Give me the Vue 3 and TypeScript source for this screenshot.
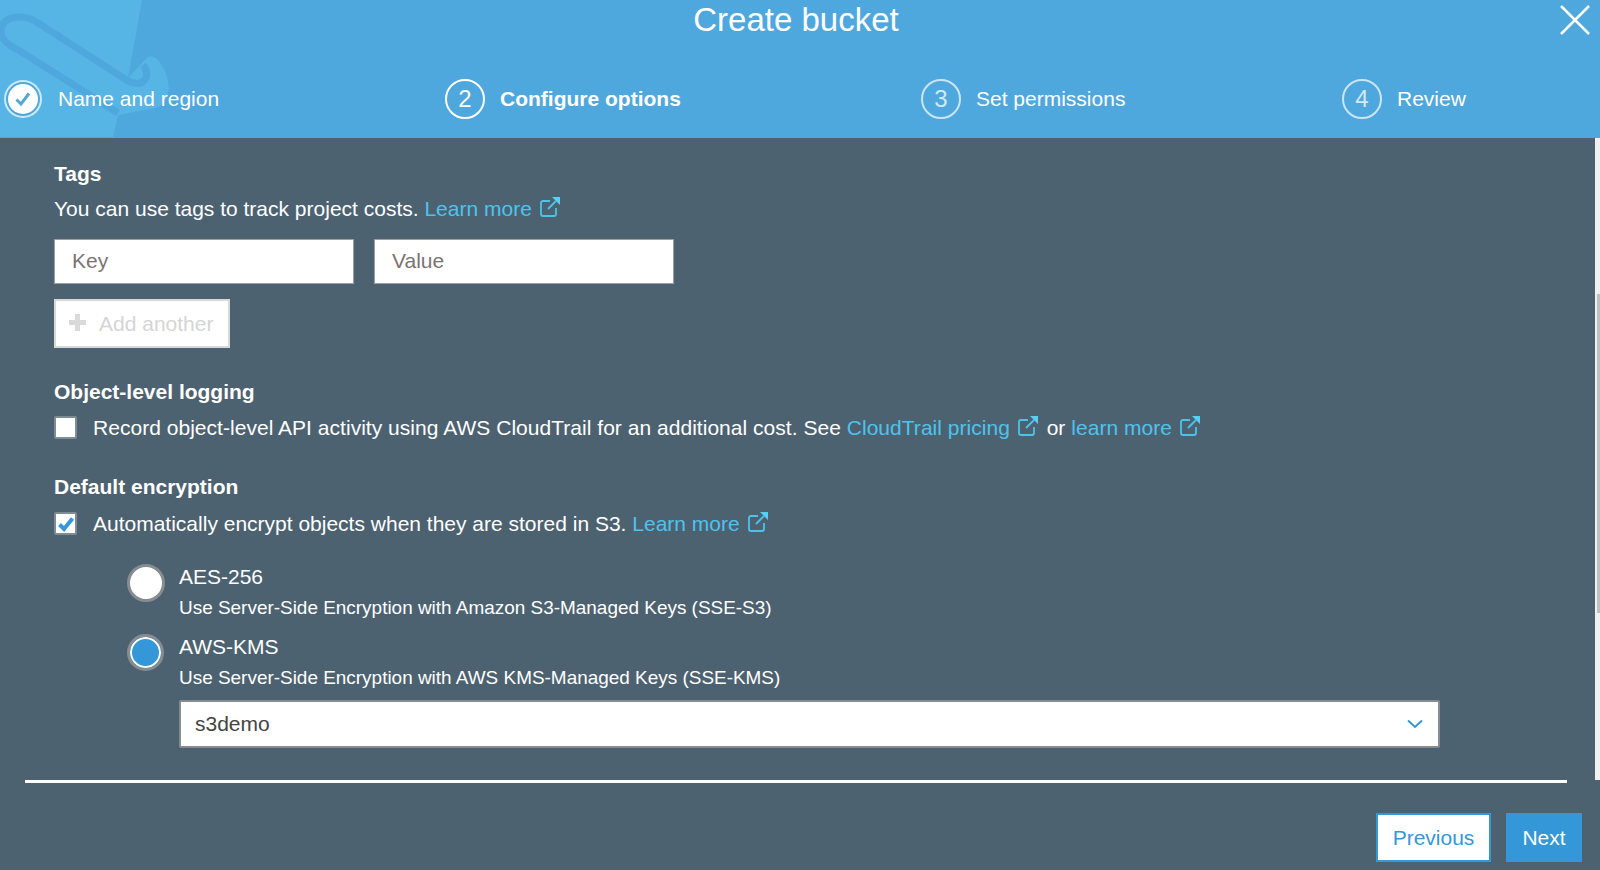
<script setup lang="ts">
const steps = [
  { n: "✓", label: "Name and region", state: "done" },
  { n: "2", label: "Configure options", state: "active" },
  { n: "3", label: "Set permissions", state: "" },
  { n: "4", label: "Review", state: "" },
];
</script>

<template>
  <div class="page">
    <header class="head">
      <svg class="logo" width="175" height="138" viewBox="0 0 175 138">
        <path d="M0 0H142L128 78L143 62Q152 50 161 64Q172 82 167 98Q161 108 150 109L118 115L113 137H0Z" fill="#57b5e5" />
        <path d="M118 113L20 51Q1 42 1 32Q1 17 20 17Q30 17 38 23L128 81Q138 86 144 81Q150 74 143 65" fill="none" stroke="#4fa8dd" stroke-width="7" />
      </svg>
      <h1 class="title">Create bucket</h1>
      <svg class="close" width="32" height="32" viewBox="0 0 32 32">
        <path d="M2 2L30 30M30 2L2 30" stroke="#fff" stroke-width="2.500" fill="none" />
      </svg>
      <ol class="steps">
        <li v-for="s in steps" :key="s.label" :class="['step', s.state]">
          <span class="num">
            <svg v-if="s.state === 'done'" width="20" height="18" viewBox="0 0 20 18">
              <path d="M3.500 9.500L8 14L16 3.500" stroke="#4fa8dd" stroke-width="3" fill="none" />
            </svg>
            <template v-else>{{ s.n }}</template>
          </span>
          <span>{{ s.label }}</span>
        </li>
      </ol>
    </header>

    <main class="body">
      <div class="content">
        <h2 class="heading">Tags</h2>
        <p class="line">
          You can use tags to track project costs.
          <a class="link">Learn more <svg class="ext" viewBox="0 0 22 22"><path d="M17 12V18Q17 20 15 20H4Q2 20 2 18V7Q2 5 4 5H11M9 13L17 5" /><path class="head-fill" d="M13 1H21V9Z" /></svg></a>
        </p>
        <div class="tag-row">
          <div class="field">Key</div>
          <div class="field">Value</div>
        </div>
        <button class="add"><span class="plus"></span>Add another</button>

        <h2 class="heading logging">Object-level logging</h2>
        <div class="check-row">
          <span class="box"></span>
          <p class="line wide">
            Record object-level API activity using AWS CloudTrail for an additional cost. See
            <a class="link">CloudTrail pricing <svg class="ext" viewBox="0 0 22 22"><path d="M17 12V18Q17 20 15 20H4Q2 20 2 18V7Q2 5 4 5H11M9 13L17 5" /><path class="head-fill" d="M13 1H21V9Z" /></svg></a>
            or
            <a class="link">learn more <svg class="ext" viewBox="0 0 22 22"><path d="M17 12V18Q17 20 15 20H4Q2 20 2 18V7Q2 5 4 5H11M9 13L17 5" /><path class="head-fill" d="M13 1H21V9Z" /></svg></a>
          </p>
        </div>

        <h2 class="heading encryption">Default encryption</h2>
        <div class="check-row">
          <span class="box">
            <svg width="18" height="16" viewBox="0 0 18 16"><path d="M2.500 8.500L7 13L15.500 2.500" stroke="#3498d8" stroke-width="4" fill="none" /></svg>
          </span>
          <p class="line">
            Automatically encrypt objects when they are stored in S3.
            <a class="link">Learn more <svg class="ext" viewBox="0 0 22 22"><path d="M17 12V18Q17 20 15 20H4Q2 20 2 18V7Q2 5 4 5H11M9 13L17 5" /><path class="head-fill" d="M13 1H21V9Z" /></svg></a>
          </p>
        </div>

        <div class="options">
          <div class="option">
            <span class="radio"></span>
            <div class="opt-text">
              <div class="opt-name">AES-256</div>
              <div class="opt-desc">Use Server-Side Encryption with Amazon S3-Managed Keys (SSE-S3)</div>
            </div>
          </div>
          <div class="option kms">
            <span class="radio on"></span>
            <div class="opt-text">
              <div class="opt-name">AWS-KMS</div>
              <div class="opt-desc">Use Server-Side Encryption with AWS KMS-Managed Keys (SSE-KMS)</div>
            </div>
          </div>
          <div class="select">
            <span>s3demo</span>
            <svg width="16" height="10" viewBox="0 0 16 10"><path d="M1 1.500L8 8L15 1.500" stroke="#3498d8" stroke-width="2" fill="none" /></svg>
          </div>
        </div>
      </div>
      <div class="rail"><div class="thumb"></div></div>
    </main>

    <footer class="foot">
      <div class="rule"></div>
      <div class="actions">
        <button class="btn prev">Previous</button>
        <button class="btn next">Next</button>
      </div>
    </footer>
  </div>
</template>

<style>
html, body { margin: 0; overflow: hidden; }
</style>

<style scoped>
.page {
  width: 1600px;
  height: 870px;
  display: flex;
  flex-direction: column;
  background: #4d6271;
  color: #fff;
  font-family: "Liberation Sans", Arial, sans-serif;
  overflow: hidden;
}
.head {
  position: relative;
  height: 138px;
  flex: none;
  background: #4fa8dd;
  overflow: hidden;
}
.logo { position: absolute; left: 0; top: 0; }
.title {
  position: relative;
  margin: 0;
  padding: 1px 8px 0 0;
  height: 45px;
  font-size: 33px;
  font-weight: 400;
  line-height: 37px;
  text-align: center;
}
.close { position: absolute; top: 4px; right: 9px; }
.steps {
  position: relative;
  list-style: none;
  margin: 33px 0 0;
  padding: 0;
  display: grid;
  grid-template-columns: 441px 476px 421px 1fr;
  font-size: 21px;
}
.step { display: flex; align-items: center; gap: 15px; padding-left: 4px; height: 40px; }
.num {
  width: 36px;
  height: 36px;
  flex: none;
  border: 2px solid rgba(255, 255, 255, .7);
  border-radius: 50%;
  display: flex;
  align-items: center;
  justify-content: center;
  font-size: 24px;
  color: rgba(255, 255, 255, .75);
}
.active { font-weight: 700; }
.active .num { border-color: #fff; color: #fff; font-weight: 400; }
.done .num {
  width: 30px;
  height: 30px;
  margin: 4px;
  background: #fff;
  border: 0;
  box-shadow: 0 0 0 2px #4fa8dd, 0 0 0 4px rgba(255, 255, 255, .7);
}
.done { gap: 16px; }
.body { flex: 1; display: flex; min-height: 0; }
.content { flex: 1; padding: 24px 0 0 54px; min-width: 0; }
.rail { width: 5px; background: #f1f1f1; }
.thumb { width: 3px; height: 319px; margin: 156px 0 0 2px; background: #c1c1c1; }
.heading {
  margin: 0;
  font-size: 21px;
  line-height: 24px;
  font-weight: 700;
}
.line { margin: 0; font-size: 21px; line-height: 24px; }
.wide { letter-spacing: .03px; }
.heading + .line { margin-top: 10px; }
.link { color: #4dc3ec; }
.ext {
  width: 22px;
  height: 22px;
  vertical-align: -2px;
  margin: 0 2px 0 1px;
  fill: none;
  stroke: #4dc3ec;
  stroke-width: 1.800;
}
.head-fill { fill: #5ccdf3; stroke: none; }
.tag-row { display: flex; gap: 20px; margin-top: 18px; }
.field {
  width: 300px;
  height: 45px;
  box-sizing: border-box;
  padding-left: 17px;
  background: #fff;
  border: 1px solid #9aa0a3;
  color: #7b7474;
  font-size: 21px;
  line-height: 41px;
}
.add {
  display: flex;
  align-items: center;
  margin-top: 15px;
  width: 176px;
  height: 49px;
  padding: 0 0 0 13px;
  box-sizing: border-box;
  background: #fff;
  border: 2px solid #d9d9d9;
  color: #d5d5d5;
  font: 21px "Liberation Sans", Arial, sans-serif;
}
.plus {
  width: 17px;
  height: 17px;
  margin: -3px 13px 0 0;
  background:
    linear-gradient(#d9d9d9, #d9d9d9) center / 17px 5px no-repeat,
    linear-gradient(#d9d9d9, #d9d9d9) center / 5px 17px no-repeat;
}
.logging { margin-top: 32px; }
.encryption { margin-top: 35px; }
.check-row { display: flex; align-items: center; gap: 16px; margin-top: 11px; }
.encryption + .check-row { margin-top: 12px; }
.box {
  width: 23px;
  height: 23px;
  box-sizing: border-box;
  flex: none;
  display: flex;
  align-items: center;
  justify-content: center;
  background: #fff;
  border: 2px solid #7f8c94;
  border-radius: 2px;
}
.options { margin: 28px 0 0 73px; }
.option { display: flex; gap: 14px; }
.opt-text { padding-top: 1px; }
.kms { margin-top: 15px; }
.radio {
  width: 38px;
  height: 38px;
  box-sizing: border-box;
  flex: none;
  background: #fff;
  border: 3px solid #868c90;
  border-radius: 50%;
}
.on {
  width: 37px;
  height: 37px;
  margin-right: 1px;
  background: #3498d8;
  box-shadow: inset 0 0 0 2px #fff;
}
.opt-name { font-size: 21px; line-height: 24px; }
.opt-desc { margin-top: 8px; font-size: 18.950px; line-height: 22px; }
.select {
  display: flex;
  align-items: center;
  justify-content: space-between;
  width: 1261px;
  height: 48px;
  box-sizing: border-box;
  margin: 11px 0 0 52px;
  padding: 0 15px 0 14px;
  background: #fff;
  border: 2px solid #868c90;
  border-radius: 2px;
  color: #444;
  font-size: 21px;
}
.foot { flex: none; }
.rule { height: 3px; margin: 0 33px 0 25px; background: #fff; }
.actions { display: flex; justify-content: flex-end; gap: 15px; padding: 30px 18px 8px 0; }
.btn {
  height: 49px;
  box-sizing: border-box;
  font: 21px "Liberation Sans", Arial, sans-serif;
}
.prev { width: 115px; background: #fff; border: 2px solid #3498d8; color: #3498d8; }
.next { width: 76px; background: #3498d8; border: 0; color: #fff; }
</style>
